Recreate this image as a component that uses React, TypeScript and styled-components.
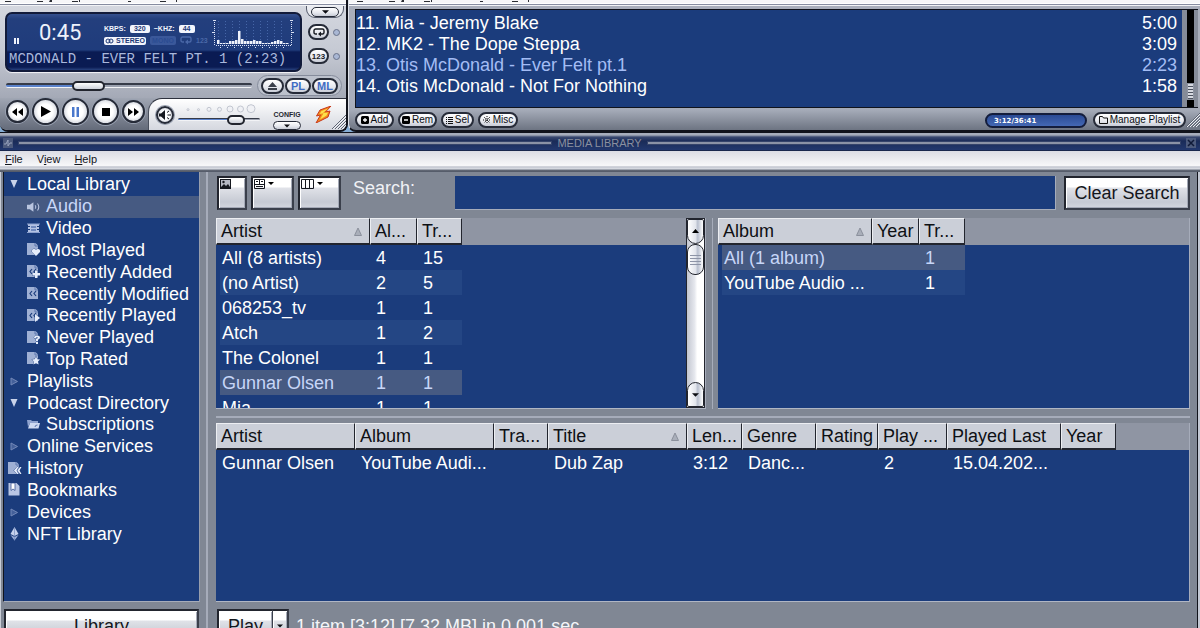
import React from 'react';
import styled, { createGlobalStyle, css } from 'styled-components';

const NAVY = '#1b3c7c';
const CHROME = '#808794';

const GlobalStyle = createGlobalStyle`
  * { box-sizing: border-box; }
  body {
    margin: 0;
    background: ${CHROME};
    font-family: "Liberation Sans", Arial, sans-serif;
    font-size: 18px;
    color: #fff;
  }
  button, input { font: inherit; margin: 0; padding: 0; border: 0; border-radius: 0; }
  svg { display: block; flex: none; }
`;

const Page = styled.div`
  height: 100vh;
  overflow: hidden;
  display: flex;
  flex-direction: column;
`;

const TopRow = styled.div`
  display: flex;
  flex: none;
  height: 132px;
  background: #86aed6;
`;

const Strip = styled.div`
  height: 6px;
  flex: none;
  background: linear-gradient(#f6f6f8 3px, #fff 3px, #fff 4px, #868ca0 4px, #868ca0 5px, #f2f3f6 5px);
`;

/* ---------- player ---------- */

const Player = styled.section`
  width: 348px;
  flex: none;
  display: flex;
  flex-direction: column;
  border-right: 2px solid #11131b;
  border-bottom: 2px solid #11131b;
  border-radius: 0 0 8px 8px;
  overflow: hidden;
  background: linear-gradient(#d4d7df 6px, #c6cad4 50px, #a4a9b6 98px);
`;

const PlayerTop = styled.div`
  display: flex;
  gap: 4px;
  height: 65px;
  flex: none;
  padding-left: 5px;
`;

const Lcd = styled.div`
  width: 297px;
  height: 60px;
  margin-top: 6px;
  border: 2px solid #121b3a;
  border-radius: 7px;
  box-shadow: 0 1px 1px #f4f5f8;
  background:
    radial-gradient(circle, rgba(10, 25, 75, 0.4) 1px, transparent 1px) 0 0 / 2px 2px,
    linear-gradient(#5074ba, #34589f 5px, #2d539c 36px, #0a1c58 38px, #0a1c58 53px, #3c5ca0);
  overflow: hidden;
`;

const LcdTop = styled.div`
  display: flex;
  height: 37px;
  padding: 5px 0 0 7px;
`;

const LcdStatus = styled.div`
  width: 25px;
  padding-top: 19px;
`;

const LcdTime = styled.div`
  width: 65px;
  padding-top: 3px;
  font: 400 22px/22px Roboto, sans-serif;
  color: #eef2fb;
`;

const LcdInfo = styled.div`
  width: 108px;
  padding-top: 5px;
  display: flex;
  flex-direction: column;
  gap: 3px;
`;

const LcdLine = styled.div`
  display: flex;
  align-items: center;
  gap: 4px;
  height: 9px;
  font: bold 7px/9px "Liberation Sans", sans-serif;
  color: #f2f5fd;
`;

const Badge = styled.span<{ $w: number; $off?: boolean }>`
  width: ${p => p.$w}px;
  height: ${p => (p.$off ? 9 : 8)}px;
  line-height: 9px;
  display: flex;
  align-items: center;
  justify-content: center;
  gap: 2px;
  border-radius: 2px;
  background: ${p => (p.$off ? '#3a589a' : '#f2f5fd')};
  color: ${p => (p.$off ? '#2b4c92' : '#1d3876')};
`;

const Faint = styled.span`
  color: #4a68a8;
`;

const Marquee = styled.div`
  padding-left: 2px;
  font: 14px/16px "Liberation Mono", monospace;
  color: #a9b8dc;
  white-space: pre;
  overflow: hidden;
`;

const SideControls = styled.div`
  flex: 1;
  display: flex;
  flex-direction: column;
`;

const MenuTab = styled.div`
  width: 38px;
  height: 15px;
  display: flex;
  justify-content: center;
  padding-top: 1px;
  border: 1px solid #555b6b;
  border-top: 0;
  border-radius: 0 0 9px 9px;
  background: #e9ebf0;
  margin-bottom: 6px;
`;

const ModeRow = styled.div`
  display: flex;
  align-items: center;
  gap: 4px;
  height: 16px;
  margin: 0 0 8px 2px;
`;

const Led = styled.span`
  width: 7px;
  height: 7px;
  border: 1px solid #69728a;
  border-radius: 50%;
  background: #a9b7d4;
`;

const Pill = styled.button<{ $w: number; $h?: number; $blue?: boolean }>`
  width: ${p => p.$w}px;
  height: ${p => p.$h ?? 16}px;
  flex: none;
  display: flex;
  align-items: center;
  justify-content: center;
  gap: 2px;
  border: 2px solid #262b38;
  border-radius: 9px;
  background: linear-gradient(#fff, #e6e8ee 60%, #c8ccd6);
  color: ${p => (p.$blue ? '#3f6cc4' : '#0b0d12')};
  font: ${p => (p.$blue ? 'bold 11px' : '10px')}/12px "Liberation Sans", sans-serif;
  white-space: nowrap;
`;

const SmallPill = styled(Pill)`
  border-width: 1px;
`;

const SeekRow = styled.div`
  display: flex;
  align-items: center;
  gap: 5px;
  height: 27px;
  flex: none;
  padding: 2px 4px 0 6px;
`;

const Slider = styled.input<{ $fill: number; $w: number; $thumb: number; $thin?: boolean }>`
  appearance: none;
  display: block;
  width: ${p => p.$w}px;
  height: 10px;
  background: none;

  &::-webkit-slider-runnable-track {
    height: ${p => (p.$thin ? 3 : 5)}px;
    border-top: ${p => (p.$thin ? 1 : 2)}px solid #363b48;
    border-bottom: 1px solid #f2f3f6;
    border-radius: 2px;
    background: linear-gradient(90deg, #5a82cc ${p => p.$fill}%, #9ba1af ${p => p.$fill}%);
  }

  &::-webkit-slider-thumb {
    appearance: none;
    width: ${p => p.$thumb}px;
    height: 10px;
    margin-top: -4px;
    border: 2px solid #22252e;
    border-radius: 5px;
    background: linear-gradient(#fff, #cdd1da);
  }
`;

const Capsule = styled.div`
  display: flex;
  align-items: center;
  gap: 1px;
  height: 21px;
  width: 85px;
  padding: 0 3px;
  border-radius: 11px;
  border: 1px solid #868c9c;
  background: #bcc1cc;
`;

const Transport = styled.div`
  flex: 1;
  display: flex;
  background: linear-gradient(#a0a6b3, #626978);
`;

const RoundButtons = styled.div`
  display: flex;
  align-items: center;
  gap: 3px;
  width: 151px;
  padding: 0 0 6px 6px;
`;

const Round = styled.button<{ $d: number }>`
  width: ${p => p.$d}px;
  height: ${p => p.$d}px;
  flex: none;
  display: flex;
  align-items: center;
  justify-content: center;
  border: 2px solid #262b38;
  border-radius: 50%;
  background: radial-gradient(circle, #fff 45%, #b4bac8);
  box-shadow: 0 0 0 1px #98a0b0;
`;

const VolumePanel = styled.div`
  flex: 1;
  display: flex;
  border-top: 1px solid #2d313d;
  border-left: 1px solid #4a505e;
  border-radius: 14px 0 0 0;
  background: linear-gradient(#fff, #d3d6de);
  padding: 1px 0 0 7px;
`;

const Mute = styled(Round)`
  margin-top: 6px;
`;

const VolumeStack = styled.div`
  width: 82px;
  margin: 4px 0 0 4px;
`;

const ConfigStack = styled.div`
  width: 38px;
  margin-left: 8px;
  display: flex;
  flex-direction: column;
  align-items: center;
  gap: 2px;
  padding-top: 10px;
  font: bold 7px/9px "Liberation Sans", sans-serif;
  color: #23262f;
`;

const BoltBox = styled.div`
  padding: 6px 0 0 9px;
`;

const GripBox = styled.div`
  align-self: flex-end;
  margin-left: auto;
  padding-bottom: 2px;
`;

/* ---------- playlist ---------- */

const Playlist = styled.section`
  flex: 1;
  min-width: 0;
  display: flex;
  flex-direction: column;
  border-left: 1px solid #dfe2e9;
  border-bottom: 2px solid #11131b;
  border-radius: 0 0 0 8px;
  background: linear-gradient(#a9aebb 100px, #a5abb8 110px, #6d7482);
  overflow: hidden;
`;

const PlaylistMain = styled.div`
  height: 102px;
  display: flex;
  padding: 3px 2px 0 6px;
`;

const TrackList = styled.ol`
  flex: 1;
  margin: 0;
  padding: 3px 5px 0 0;
  list-style: none;
  background: ${NAVY};
  border: 1px solid #10131c;
  border-right: 0;
`;

const Track = styled.li<{ $current?: boolean }>`
  display: flex;
  justify-content: space-between;
  line-height: 21px;
  font-size: 18px;
  color: ${p => (p.$current ? '#a3bcf4' : '#fff')};
`;

const PlaylistScroll = styled.div`
  width: 16px;
  padding: 0 4px 0 5px;
  background: #858b98;
  border-top: 1px solid #10131c;
  border-bottom: 1px solid #10131c;
`;

const ScrollTrack = styled.div`
  height: 100%;
  padding-top: 73px;
  background: #000;
`;

const ScrollThumb = styled.div`
  height: 17px;
  border: 1px solid #8d93a0;
  background: repeating-linear-gradient(#d5d8e0 0 2px, #4d5360 2px 3px);
`;

const PlaylistBar = styled.div`
  flex: 1;
  display: flex;
  align-items: center;
  gap: 4px;
  padding: 2px 0 0 6px;
`;

const TimeBox = styled.div`
  width: 102px;
  height: 15px;
  margin: 0 2px 0 auto;
  padding-left: 7px;
  border: 2px solid #141d3c;
  border-radius: 8px;
  background: linear-gradient(#2a4a94, #4468b4);
  font: bold 7px/12px "DejaVu Sans", sans-serif;
`;

const BarEnd = styled.div`
  display: flex;
  align-items: center;
`;

/* ---------- media library ---------- */

const Library = styled.main`
  flex: none;
`;

const TitleBar = styled.header`
  display: flex;
  align-items: center;
  gap: 5px;
  height: 19px;
  padding: 1px 4px 0 3px;
  border-top: 1px solid #11131b;
  background: linear-gradient(#a7adbb 2px, #3a4970 4px, #1a2b58 8px, #22386e 17px, #11172c);
  font-size: 11px;
  color: #8a90a0;
`;

const Rule = styled.span`
  flex: 1;
  height: 4px;
  background: #8a92a6;
  border: 1px solid #34436a;
`;

const WinButton = styled.button`
  width: 10px;
  height: 10px;
  background: #4c5a7c;
  display: flex;
  align-items: center;
  justify-content: center;
`;

const MenuBar = styled.nav`
  display: flex;
  gap: 14px;
  height: 21px;
  padding: 1px 0 0 5px;
  background: linear-gradient(#dcdde4, #f6f6f8 14px, #f6f6f8 15px, #a9aebc 16px, #e8eaef 17px, #c2c6d0 18px, #3f4553 20px, #6d7482);
`;

const MenuLink = styled.a`
  font: 11px/14px "Liberation Sans", sans-serif;
  color: #14161c;
  text-decoration: none;
`;

const LibraryBody = styled.div`
  display: grid;
  grid-template-columns: 197px 8px 1fr;
  padding: 0 8px 0 2px;
  border-left: 1px solid #c9cdd6;
  border-right: 2px solid #c3c8d3;
  background: ${CHROME};
  box-shadow: inset -1px 0 #11131b;
`;

const Sidebar = styled.div`
  display: flex;
  flex-direction: column;
`;

const TreePanel = styled.div`
  height: 430px;
  padding-top: 2px;
  background: ${NAVY};
  border-left: 1px solid #10131c;
  border-right: 1px solid #989eac;
  border-bottom: 1px solid #a6acba;
`;

const Tree = styled.ul`
  height: 371px;
  margin: 0;
  padding: 0;
  list-style: none;
  display: grid;
  grid-auto-rows: 1fr;
`;

const TreeItem = styled.li<{ $child?: boolean; $selected?: boolean }>`
  display: flex;
  align-items: center;
  gap: 5px;
  padding-left: ${p => (p.$child ? 23 : 4)}px;
  background: ${p => (p.$selected ? '#465a82' : 'transparent')};
  color: ${p => (p.$selected ? '#c7d6f8' : '#fff')};

  svg { width: 14px; }
`;

const Splitter = styled.div`
  border-right: 2px solid #a6acba;
`;

const Content = styled.div`
  min-width: 0;
  padding-left: 8px;
`;

const Toolbar = styled.div`
  display: flex;
  align-items: flex-start;
  gap: 4px;
  height: 46px;
  padding: 4px 0 0 1px;
`;

const bevel = css`
  border: 2px solid #22252e;
  border-color: #22252e #3a3f4b #3a3f4b #22252e;
  background: linear-gradient(#fff 9px, #e0e2e8 10px, #c6cad3 24px, #d4d7df);
  box-shadow: inset 1px 1px #fff, inset -1px -1px #a4a9b6;
  color: #14161c;
`;

const ToolButton = styled.button<{ $w: number }>`
  ${bevel}
  width: ${p => p.$w}px;
  height: 34px;
  display: flex;
  align-items: flex-start;
  padding: 1px;
`;

const SearchLabel = styled.label`
  width: 106px;
  padding-left: 8px;
  line-height: 25px;
  color: #f0f2f6;
`;

const SearchInput = styled.input`
  flex: 1;
  height: 34px;
  min-width: 0;
  padding: 0 6px;
  background: ${NAVY};
  color: #fff;
  border-right: 1px solid #a6acba;
  border-bottom: 1px solid #a6acba;
`;

const TextButton = styled.button`
  ${bevel}
  height: 34px;
  padding: 0;
`;

const ClearButton = styled(TextButton)`
  width: 126px;
  margin-left: 4px;
`;

const Panels = styled.div`
  display: grid;
  grid-template-columns: 490px 12px 1fr;
  height: 200px;
  padding-bottom: 7px;
  border-bottom: 2px solid #a6acba;
  margin-bottom: 5px;
`;

const PanelSplitter = styled.div`
  border-right: 1px solid #a6acba;
  margin-right: 5px;
`;

const Panel = styled.div`
  display: flex;
  min-width: 0;
  overflow: hidden;
  border-bottom: 1px solid #b0b6c4;
  border-right: 1px solid #a6acba;
  background: linear-gradient(#8f95a3 27px, ${NAVY} 27px);
`;

const TracksPanel = styled(Panel)`
  height: 179px;
`;

const PanelBody = styled.div`
  flex: 1;
  min-width: 0;
  overflow: hidden;
`;

const Table = styled.table`
  table-layout: fixed;
  border-collapse: separate;
  border-spacing: 0;
`;

const Th = styled.th`
  height: 27px;
  padding: 1px 0 0 4px;
  text-align: left;
  font-weight: normal;
  line-height: 23px;
  color: #0e1014;
  background: #cbcfd8;
  border-top: 1px solid #eceef2;
  border-left: 1px solid #eceef2;
  border-right: 1px solid #22252e;
  border-bottom: 2px solid #22252e;
  white-space: nowrap;
`;

const ThInner = styled.span`
  display: flex;
  align-items: center;
  justify-content: space-between;
  padding-right: 7px;
`;

const Td = styled.td`
  height: 25px;
  padding: 2px 0 0 6px;
  line-height: 23px;
  white-space: nowrap;
`;

const Tr = styled.tr<{ $tone?: 'alt' | 'selected' }>`
  color: ${p => (p.$tone === 'selected' ? '#c7d6f8' : '#fff')};

  ${Td} {
    background: ${p => (p.$tone === 'selected' ? '#465a82' : p.$tone === 'alt' ? '#244684' : 'transparent')};
  }

  ${Td}:first-child {
    border-left: 4px solid ${NAVY};
    padding-left: 2px;
  }
`;

const VScroll = styled.div`
  width: 19px;
  display: flex;
  flex-direction: column;
  border: 1px solid #22252e;
  background: linear-gradient(90deg, #c2c6d0, #e6e8ee 45%, #fff 60%, #fff);
`;

const VButton = styled.button<{ $h: number; $down?: boolean }>`
  height: ${p => p.$h}px;
  flex: none;
  display: flex;
  align-items: center;
  justify-content: center;
  border: 1px solid #22252e;
  border-radius: ${p => (p.$down ? '9px 9px 2px 2px' : '2px 2px 9px 9px')};
  background: linear-gradient(90deg, #fff, #e2e5ec 50%, #b8bfce 65%, #fff);
`;

const VThumb = styled(VButton)`
  border-radius: 8px;
  margin-bottom: auto;
`;

const FooterBar = styled.div`
  display: flex;
  align-items: center;
  padding: 7px 0 0 1px;
`;

const LibraryButton = styled(TextButton)`
  margin: 7px 1px 0 1px;
`;

const PlayButton = styled(TextButton)`
  width: 56px;
  border-right: 1px solid #3a3f4b;
`;

const PlayMore = styled(TextButton)`
  width: 16px;
  display: flex;
  align-items: center;
  justify-content: center;
  border-left: 0;
`;

const Status = styled.p`
  margin: 0 0 0 7px;
  color: #f4f5f8;
`;

/* ---------- drawings ---------- */

const Down = ({ w = 7, fill = '#0b0d12' }: { w?: number; fill?: string }) => (
  <svg width={w} height="4" viewBox="0 0 8 4" aria-hidden="true"><path d="M0 0h8L4 4z" fill={fill} /></svg>
);

const Repeat = ({ c = '#15181f' }: { c?: string }) => (
  <svg width="12" height="9" viewBox="0 0 12 9" fill="none" stroke={c} strokeWidth="1.4" aria-hidden="true">
    <path d="M4 6H2.6A1.6 1.6 0 0 1 1 4.400V2.600A1.600 1.600 0 0 1 2.600 1h6.800A1.600 1.600 0 0 1 11 2.600v1.800A1.600 1.600 0 0 1 9.400 6H7" />
    <path d="M8 3.500v5L5 6z" fill={c} stroke="none" />
  </svg>
);

const ShuffleText = styled.span`
  font: bold 8px/9px "Liberation Sans", sans-serif;
  color: #15181f;
`;

const Grip = () => (
  <svg width="14" height="14" viewBox="0 0 14 14" stroke="#5d6473" strokeWidth="1" aria-hidden="true">
    <path d="M0 14 14 0M3 14 14 3M6 14 14 6M9 14l5-5M12 14l2-2" />
    <path d="M1 14 14 1M4 14 14 4M7 14l7-7M10 14l4-4" stroke="#eef0f4" />
  </svg>
);

const bars = [4, 1, 1, 1, 3, 3, 4, 13, 5, 3, 3, 3, 4, 3, 3, 1, 1, 1, 2, 3, 4, 3, 1, 1];

const Spectrum = () => (
  <svg width="82" height="31" viewBox="0 0 82 31" aria-hidden="true">
    <g stroke="#4666a8" strokeDasharray="1 2">
      {[6, 13, 20, 27, 34, 41, 48, 55, 62, 69].map(x => <path key={x} d={`M${x}.5 2v22`} />)}
    </g>
    <g stroke="#d9e1f4" strokeDasharray="1 1">
      <path d="M2.500 1v26M79.500 1v26M4 26.500h75" />
    </g>
    <path d="M1 1.500h3M78 1.500h3M0 13.500h2M80 13.500h2M8 28.500h1M15 28.500h1M22 28.500h1M29 28.500h1M36 28.500h1M43 28.500h1M50 28.500h1M57 28.500h1M64 28.500h1M71 28.500h1" stroke="#d9e1f4" />
    {bars.map((h, i) => <rect key={i} x={5 + i * 3} y={25 - h} width="2.500" height={h} fill="#eef2fb" />)}
  </svg>
);

const Bolt = () => (
  <svg width="17" height="17" viewBox="0 0 17 17" aria-hidden="true">
    <path d="M16 0 5 4 1.500 10l4-1L1 17l12-6 2-6-4.500 1z" fill="#f28a1c" stroke="#c8381a" strokeWidth="1" />
    <path d="M13 2.500 6.500 5 4.500 8l4-.8L5 13.500l6.500-4L13 6.500 8 7z" fill="#fde04a" />
  </svg>
);

const Speaker = ({ c, s = 12 }: { c: string; s?: number }) => (
  <svg width={s} height={s} viewBox="0 0 12 12" aria-hidden="true">
    <path d="M0 4h2.500L5.500 2v8L2.500 8H0z" fill={c} />
    <path d="M7 4.500q1.200 1.500 0 3M9 3q2.200 3 0 6" fill="none" stroke={c} strokeWidth=".9" />
  </svg>
);

const LoudSpeaker = () => (
  <svg width="12" height="10" viewBox="0 0 12 10" aria-hidden="true">
    <path d="M0 3.500h2L6 0v10L2 6.500H0z" fill="#15181f" />
    <path d="M8 2.500 10 1M8.500 5H12M8 7.500 10 9" fill="none" stroke="#15181f" />
  </svg>
);

const Expander = ({ open }: { open: boolean }) => (
  <svg width="13" height="13" viewBox="0 0 13 13" aria-hidden="true">
    {open
      ? <path d="M2 2h7L5.500 10z" fill="#c9d3ea" />
      : <path d="M2.500 3v7l6.500-3.500z" fill="#44609a" stroke="#7388b8" />}
  </svg>
);

type Badges = 'heart' | 'plus' | 'rewind' | 'play' | 'query' | 'star' | 'history';

const badgeShape: Record<Badges, React.ReactNode> = {
  heart: <path d="M9 13 5 9q-.5-3 2-3 1.500 0 2 1 .5-1 2-1 2.500 0 2 3z" />,
  plus: <path d="M8 5.500h2.500V8H13v2.500h-2.500V13H8v-2.500H5.500V8H8z" />,
  rewind: null,
  play: <path d="M8 5v8l5-4z" />,
  query: <path d="M7 7q0-2.500 3-2.500 3 0 3 2 0 1.500-2 2.300V10H9V8q1.800-.5 1.800-1.300T10 6Q9 6 9 7zM9 11h2v2H9z" />,
  star: <path d="m9 4.500 1.200 2.700 2.800.3-2 2 .6 3L9 11l-2.600 1.500.6-3-2-2 2.800-.3z" />,
  history: <path d="M9 5 6 8.500 9 12h1.500l-2-3.500 2-3.500zM12 5 9.500 8.500 12 12h1.500l-2-3.500 2-3.500z" />,
};

const Doc = ({ badge }: { badge: Badges }) => (
  <svg width="14" height="14" viewBox="0 0 14 14" aria-hidden="true">
    <path d="M0 0h8.500L11 2.500V12H0z" fill="#9fb0d4" />
    <path d="M8 0v3h3" fill="none" stroke="#5c76ae" />
    {(badge === 'plus' || badge === 'rewind' || badge === 'play') && (
      <path d="M5 4 3 6.500 5 9M9 4 7 6.500 9 9" fill="none" stroke="#1b3c7c" strokeWidth="1.200" />
    )}
    <g fill="#e6edfb" stroke="#1b3c7c" strokeWidth=".7" paintOrder="stroke">{badgeShape[badge]}</g>
  </svg>
);

const Film = () => (
  <svg width="14" height="14" viewBox="0 0 14 14" aria-hidden="true">
    <path d="M1 2h11v9H1z" fill="#b4c2e2" />
    <path d="M4 4h5v2H4zM4 7h5v2H4z" fill="#7089be" />
    <path d="M1 4.500h2M1 7.500h2M10 4.500h2M10 7.500h2" stroke="#1b3c7c" strokeWidth="1" />
    <path d="M0 2h13M0 10.500h13" stroke="#8ea2cf" />
  </svg>
);

const Folder = () => (
  <svg width="14" height="14" viewBox="0 0 14 14" aria-hidden="true">
    <path d="M0 2h4l1 1h6v2H3L1 9z" fill="#8fa3cf" />
    <path d="M3 5h10l-1.500 5.500H1z" fill="#cfdaf2" />
    <path d="M8 9q0-2 2.500-2" stroke="#5c76ae" fill="none" />
  </svg>
);

const Bookmark = () => (
  <svg width="13" height="14" viewBox="0 0 13 14" aria-hidden="true">
    <path d="M0 0h8l3 3v9.500H0z" fill="#b9c6e4" />
    <path d="M2.500 0v7.500L4.500 6l2 1.500V0z" fill="#fff" stroke="#3a5794" strokeWidth=".8" />
  </svg>
);

const Ether = () => (
  <svg width="13" height="14" viewBox="0 0 13 14" aria-hidden="true">
    <path d="m6 0 4 7-4 2-4-2z" fill="#c7d3ee" />
    <path d="m2 8 4 2 4-2-4 5.500z" fill="#9fb1da" />
    <path d="M6 0v13.500" stroke="#6f87ba" strokeWidth=".6" />
  </svg>
);

const SortMark = () => (
  <svg width="8" height="9" viewBox="0 0 8 9" aria-hidden="true"><path d="M4 1 7.500 8.500H.5z" fill="#a9aeb9" stroke="#8b909c" /></svg>
);

const MenuTraces = ({ inset }: { inset: number }) => (
  <svg width="180" height="3" viewBox="0 0 180 3" style={{ marginLeft: inset }} fill="#2b2d33" aria-hidden="true">
    <path d="M0 1h6v1H0zM32 1h6v1h-6zM45 0h2v2h-3zM67 1h6v1h-6zM74 0h1v2h-1zM123 1h3v1h-3zM155 1h6v1h-6zM171 0h1v2h-1z" />
  </svg>
);

/* ---------- data ---------- */

const tracks = [
  ['11. Mia - Jeremy Blake', '5:00'],
  ['12. MK2 - The Dope Steppa', '3:09'],
  ['13. Otis McDonald - Ever Felt pt.1', '2:23'],
  ['14. Otis McDonald - Not For Nothing', '1:58'],
];

type Node = { label: string; icon: React.ReactNode; child?: boolean; selected?: boolean };

const tree: Node[] = [
  { label: 'Local Library', icon: <Expander open /> },
  { label: 'Audio', icon: <Speaker c="#b9c5e0" s={14} />, child: true, selected: true },
  { label: 'Video', icon: <Film />, child: true },
  { label: 'Most Played', icon: <Doc badge="heart" />, child: true },
  { label: 'Recently Added', icon: <Doc badge="plus" />, child: true },
  { label: 'Recently Modified', icon: <Doc badge="rewind" />, child: true },
  { label: 'Recently Played', icon: <Doc badge="play" />, child: true },
  { label: 'Never Played', icon: <Doc badge="query" />, child: true },
  { label: 'Top Rated', icon: <Doc badge="star" />, child: true },
  { label: 'Playlists', icon: <Expander open={false} /> },
  { label: 'Podcast Directory', icon: <Expander open /> },
  { label: 'Subscriptions', icon: <Folder />, child: true },
  { label: 'Online Services', icon: <Expander open={false} /> },
  { label: 'History', icon: <Doc badge="history" /> },
  { label: 'Bookmarks', icon: <Bookmark /> },
  { label: 'Devices', icon: <Expander open={false} /> },
  { label: 'NFT Library', icon: <Ether /> },
];

type Column = { label: string; width: number; sorted?: boolean };
type Row = { cells: string[]; tone?: 'alt' | 'selected' };

const artistColumns: Column[] = [
  { label: 'Artist', width: 154, sorted: true },
  { label: 'Al...', width: 47 },
  { label: 'Tr...', width: 45 },
];

const artists: Row[] = [
  { cells: ['All (8 artists)', '4', '15'] },
  { cells: ['(no Artist)', '2', '5'], tone: 'alt' },
  { cells: ['068253_tv', '1', '1'] },
  { cells: ['Atch', '1', '2'], tone: 'alt' },
  { cells: ['The Colonel', '1', '1'] },
  { cells: ['Gunnar Olsen', '1', '1'], tone: 'selected' },
  { cells: ['Mia', '1', '1'] },
];

const albumColumns: Column[] = [
  { label: 'Album', width: 154, sorted: true },
  { label: 'Year', width: 47 },
  { label: 'Tr...', width: 46 },
];

const albums: Row[] = [
  { cells: ['All (1 album)', '', '1'], tone: 'selected' },
  { cells: ['YouTube Audio ...', '', '1'], tone: 'alt' },
];

const songColumns: Column[] = [
  { label: 'Artist', width: 139 },
  { label: 'Album', width: 139 },
  { label: 'Tra...', width: 54 },
  { label: 'Title', width: 139, sorted: true },
  { label: 'Len...', width: 55 },
  { label: 'Genre', width: 74 },
  { label: 'Rating', width: 62 },
  { label: 'Play ...', width: 69 },
  { label: 'Played Last', width: 114 },
  { label: 'Year', width: 55 },
];

const songs: Row[] = [
  { cells: ['Gunnar Olsen', 'YouTube Audi...', '', 'Dub Zap', '3:12', 'Danc...', '', '2', '15.04.202...', ''] },
];

const DataTable = ({ columns, rows }: { columns: Column[]; rows: Row[] }) => (
  <Table style={{ width: columns.reduce((sum, c) => sum + c.width, 0) }}>
    <colgroup>
      {columns.map(c => <col key={c.label} style={{ width: c.width }} />)}
    </colgroup>
    <thead>
      <tr>
        {columns.map(c => (
          <Th key={c.label} scope="col"><ThInner>{c.label}{c.sorted && <SortMark />}</ThInner></Th>
        ))}
      </tr>
    </thead>
    <tbody>
      {rows.map(r => (
        <Tr key={r.cells[0]} $tone={r.tone}>
          {r.cells.map((cell, i) => <Td key={i}>{cell}</Td>)}
        </Tr>
      ))}
    </tbody>
  </Table>
);

const PlayerWindow = () => (
  <Player aria-label="Player">
    <Strip><MenuTraces inset={5} /></Strip>
    <PlayerTop>
      <Lcd>
        <LcdTop>
          <LcdStatus>
            <svg width="6" height="6" viewBox="0 0 6 6" aria-hidden="true"><path d="M0 0h2v6H0zM3 0h2v6H3z" fill="#eef2fb" /></svg>
          </LcdStatus>
          <LcdTime>0:45</LcdTime>
          <LcdInfo>
            <LcdLine>KBPS: <Badge $w={20}>320</Badge> ~KHZ: <Badge $w={16}>44</Badge></LcdLine>
            <LcdLine>
              <Badge $w={42}>
                <svg width="9" height="6" viewBox="0 0 9 6" fill="none" stroke="#1d3876" aria-hidden="true"><circle cx="3" cy="3" r="2" /><circle cx="6" cy="3" r="2" /></svg>
                STEREO
              </Badge>
              <Badge $w={26} $off>MONO</Badge>
              <Repeat c="#4a68a8" />
              <Faint>123</Faint>
            </LcdLine>
          </LcdInfo>
          <Spectrum />
        </LcdTop>
        <Marquee>MCDONALD - EVER FELT PT. 1 (2:23)</Marquee>
      </Lcd>
      <SideControls>
        <MenuTab><SmallPill $w={28} $h={10} aria-label="Main menu"><Down /></SmallPill></MenuTab>
        <ModeRow><Pill $w={21} aria-label="Repeat"><Repeat /></Pill><Led /></ModeRow>
        <ModeRow><Pill $w={21} aria-label="Shuffle"><ShuffleText>123</ShuffleText></Pill><Led /></ModeRow>
      </SideControls>
    </PlayerTop>
    <SeekRow>
      <Slider type="range" aria-label="Seek" defaultValue={31} $fill={30} $w={246} $thumb={33} />
      <Capsule>
        <Pill $w={23} aria-label="Eject">
          <svg width="9" height="8" viewBox="0 0 9 8" aria-hidden="true"><path d="M4.500 0 9 5H0zM0 6h9v2H0z" fill="#3a3f4b" /></svg>
        </Pill>
        <Pill $w={26} $blue>PL</Pill>
        <Pill $w={26} $blue>ML</Pill>
      </Capsule>
    </SeekRow>
    <Transport>
      <RoundButtons>
        <Round $d={23} aria-label="Previous"><svg width="11" height="8" viewBox="0 0 11 8"><path d="M5 0v8L0 4zM11 0v8L6 4z" /></svg></Round>
        <Round $d={27} aria-label="Play"><svg width="10" height="11" viewBox="0 0 10 11"><path d="M0 0v11l10-5.500z" /></svg></Round>
        <Round $d={27} aria-label="Pause"><svg width="7" height="10" viewBox="0 0 7 10"><path d="M0 0h2.500v10H0zM4.500 0H7v10H4.500z" fill="#4a78cc" /></svg></Round>
        <Round $d={27} aria-label="Stop"><svg width="8" height="8" viewBox="0 0 8 8"><path d="M0 0h8v8H0z" /></svg></Round>
        <Round $d={23} aria-label="Next"><svg width="11" height="8" viewBox="0 0 11 8"><path d="M0 0v8l5-4zM6 0v8l5-4z" /></svg></Round>
      </RoundButtons>
      <VolumePanel>
        <Mute $d={18} aria-label="Mute"><LoudSpeaker /></Mute>
        <VolumeStack>
          <svg width="82" height="10" viewBox="0 0 82 10" fill="#f0f1f5" stroke="#c2c6d0" aria-hidden="true">
            {[1, 1, 2, 2, 3, 3, 4].map((r, i) => <circle key={i} cx={10 + i * 10.500} cy={6 - r / 3} r={r} />)}
          </svg>
          <Slider type="range" aria-label="Volume" defaultValue={77} $fill={60} $w={82} $thumb={18} $thin />
        </VolumeStack>
        <ConfigStack>
          CONFIG
          <SmallPill $w={28} $h={9} aria-label="Configuration"><Down w={6} /></SmallPill>
        </ConfigStack>
        <BoltBox><Bolt /></BoltBox>
        <GripBox><Grip /></GripBox>
      </VolumePanel>
    </Transport>
  </Player>
);

const PlaylistWindow = () => (
  <Playlist aria-label="Playlist">
    <Strip><MenuTraces inset={8} /></Strip>
    <PlaylistMain>
      <TrackList>
        {tracks.map(([name, length], i) => (
          <Track key={name} $current={i === 2}><span>{name}</span><span>{length}</span></Track>
        ))}
      </TrackList>
      <PlaylistScroll><ScrollTrack><ScrollThumb /></ScrollTrack></PlaylistScroll>
    </PlaylistMain>
    <PlaylistBar>
      <Pill $w={39}>
        <svg width="8" height="8" viewBox="0 0 8 8" aria-hidden="true"><rect width="8" height="8" rx="1.500" /><path d="M4 2v4M2 4h4" stroke="#fff" strokeWidth="1.300" /></svg>Add
      </Pill>
      <Pill $w={39}>
        <svg width="8" height="8" viewBox="0 0 8 8" aria-hidden="true"><rect width="8" height="8" rx="1.500" /><path d="M2 4h4" stroke="#fff" strokeWidth="1.300" /></svg>Rem
      </Pill>
      <Pill $w={33}>
        <svg width="7" height="8" viewBox="0 0 7 8" stroke="#111" aria-hidden="true"><path d="M0 1.500h1M2 1.500h5M0 3.500h1M2 3.500h5M0 5.500h1M2 5.500h5M0 7.500h1M2 7.500h5" /></svg>Sel
      </Pill>
      <Pill $w={40}>
        <svg width="8" height="8" viewBox="0 0 8 8" stroke="#111" aria-hidden="true"><path d="M4 0v8M0 4h8M1 1l6 6M7 1 1 7" strokeDasharray="1 1" /></svg>Misc
      </Pill>
      <TimeBox>3:12/36:41</TimeBox>
      <BarEnd>
        <Pill $w={93}>
          <svg width="9" height="8" viewBox="0 0 9 8" fill="none" stroke="#111" aria-hidden="true"><path d="M.5 7.500v-7h3l1 1.500h4v5.500z" /></svg>Manage Playlist
        </Pill>
        <Grip />
      </BarEnd>
    </PlaylistBar>
  </Playlist>
);

export default function App() {
  return (
    <>
      <GlobalStyle />
      <Page>
        <TopRow>
          <PlayerWindow />
          <PlaylistWindow />
        </TopRow>
        <Library>
          <TitleBar>
            <WinButton aria-label="Window menu">
              <svg width="8" height="8" viewBox="0 0 8 8" fill="none" stroke="#9aa4bd"><path d="M0 5h2l2-4v6l2-3h2" /></svg>
            </WinButton>
            <Rule />MEDIA LIBRARY<Rule />
            <WinButton aria-label="Close">
              <svg width="8" height="8" viewBox="0 0 8 8" fill="none" stroke="#0f1a38" strokeWidth="1.500"><path d="M1 1l6 6M7 1 1 7" /></svg>
            </WinButton>
          </TitleBar>
          <MenuBar>
            <MenuLink href="#file"><u>F</u>ile</MenuLink>
            <MenuLink href="#view">V<u>i</u>ew</MenuLink>
            <MenuLink href="#help"><u>H</u>elp</MenuLink>
          </MenuBar>
          <LibraryBody>
            <Sidebar>
              <TreePanel>
                <Tree>
                  {tree.map(n => (
                    <TreeItem key={n.label} $child={n.child} $selected={n.selected}>{n.icon}{n.label}</TreeItem>
                  ))}
                </Tree>
              </TreePanel>
              <LibraryButton>Library</LibraryButton>
            </Sidebar>
            <Splitter />
            <Content>
              <Toolbar>
                <ToolButton $w={30} aria-label="Toggle artwork">
                  <svg width="11" height="10" viewBox="0 0 11 10"><rect x=".5" y=".5" width="10" height="9" fill="#b5b9c4" stroke="#15181f" /><path d="M1 8l3-3 2 2 2-2 2 3v1H1z" fill="#15181f" /><circle cx="3.500" cy="3" r="1.200" fill="#15181f" /></svg>
                </ToolButton>
                <ToolButton $w={43} aria-label="Choose view">
                  <svg width="11" height="10" viewBox="0 0 11 10" fill="none" stroke="#15181f"><path d="M.5.5h10v9H.5zM5.500 0v5M0 5.500h11M2 2.500h2M7 2.500h2M2 7.500h7" /></svg>
                  <svg width="12" height="10" viewBox="0 0 12 10"><path d="M3 3h6L6 6z" /></svg>
                </ToolButton>
                <ToolButton $w={43} aria-label="Choose columns">
                  <svg width="14" height="10" viewBox="0 0 14 10" fill="none" stroke="#15181f"><path d="M.5.5h12v9H.5zM4.500 0v10M8.500 0v10" /></svg>
                  <svg width="12" height="10" viewBox="0 0 12 10"><path d="M2 3h6L5 6z" /></svg>
                </ToolButton>
                <SearchLabel htmlFor="search">Search:</SearchLabel>
                <SearchInput id="search" type="text" />
                <ClearButton>Clear Search</ClearButton>
              </Toolbar>
              <Panels>
                <Panel>
                  <PanelBody><DataTable columns={artistColumns} rows={artists} /></PanelBody>
                  <VScroll>
                    <VButton $h={25} aria-label="Scroll up"><svg width="7" height="5" viewBox="0 0 7 5"><path d="M3.500 0 7 4H0z" /></svg></VButton>
                    <VThumb $h={31} aria-label="Scroll position">
                      <svg width="11" height="12" viewBox="0 0 11 12" stroke="#8d94a6"><path d="M0 1.500h11M0 4.500h11M0 7.500h11M0 10.500h11" /></svg>
                    </VThumb>
                    <VButton $h={25} $down aria-label="Scroll down"><Down /></VButton>
                  </VScroll>
                </Panel>
                <PanelSplitter />
                <Panel>
                  <PanelBody><DataTable columns={albumColumns} rows={albums} /></PanelBody>
                </Panel>
              </Panels>
              <TracksPanel>
                <PanelBody><DataTable columns={songColumns} rows={songs} /></PanelBody>
              </TracksPanel>
              <FooterBar>
                <PlayButton>Play</PlayButton>
                <PlayMore aria-label="More play options"><Down w={6} /></PlayMore>
                <Status>1 item [3:12] [7.32 MB] in 0.001 sec.</Status>
              </FooterBar>
            </Content>
          </LibraryBody>
        </Library>
      </Page>
    </>
  );
}
